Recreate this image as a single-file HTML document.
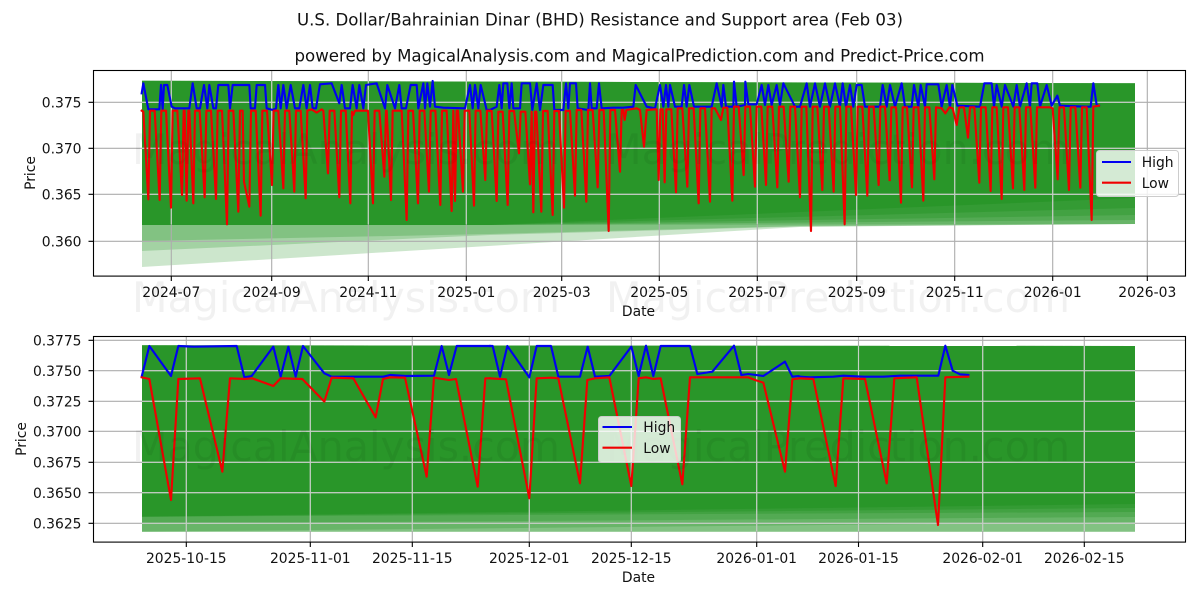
<!DOCTYPE html>
<html><head><meta charset="utf-8"><title>U.S. Dollar/Bahrainian Dinar (BHD) Resistance and Support area</title>
<style>
html,body{margin:0;padding:0;background:#fff}
svg{display:block}
text{font-family:"DejaVu Sans",sans-serif;fill:#111}
.t{font-size:13.89px}
.wm{font-size:41.67px;fill:#000;fill-opacity:.055}
.b{fill:none;stroke:#0000f0;stroke-width:6.4;stroke-linejoin:round;stroke-linecap:square}
.r{fill:none;stroke:#f00000;stroke-width:6.4;stroke-linejoin:round;stroke-linecap:square}
.f{fill:#008000;fill-opacity:.2;stroke:none}
</style></head><body>
<svg width="1200" height="600" viewBox="0 0 1200 600" xmlns="http://www.w3.org/2000/svg">
<rect width="1200" height="600" fill="#fff"/>
<text x="297" y="25.5" textLength="606" lengthAdjust="spacingAndGlyphs" style="font-size:16.67px">U.S. Dollar/Bahrainian Dinar (BHD) Resistance and Support area (Feb 03)</text>
<text x="294.5" y="61.5" textLength="690" lengthAdjust="spacingAndGlyphs" style="font-size:16.67px">powered by MagicalAnalysis.com and MagicalPrediction.com and Predict-Price.com</text>

<!-- TOP AXES fills -->
<g>
<polygon class="f" points="142,80.7 1135,83.3 1135,224 930,225.7 800,227 142,267"/>
<polygon class="f" points="142,80.7 1135,83.3 1135,224 800,226.5 490,235 142,251"/>
<polygon class="f" points="142,80.7 1135,83.3 1135,224 800,226 490,234 142,241"/>
<polygon class="f" points="142,80.7 1135,83.3 1135,224 490,225 142,225"/>
<polygon class="f" points="142,80.7 1135,83.3 1135,220 490,225 142,225"/>
<polygon class="f" points="142,80.7 1135,83.3 1135,215 490,225 142,225"/>
<polygon class="f" points="142,80.7 1135,83.3 1135,208 490,225 142,225"/>
<polygon class="f" points="142,80.7 1135,83.3 1135,198 490,225 142,225"/>
</g>
<path fill="none" stroke="#adadad" stroke-width="1.1" d="M171.3 70.5V276M271.7 70.5V276M368.3 70.5V276M466.3 70.5V276M561.7 70.5V276M659.3 70.5V276M757.3 70.5V276M856.7 70.5V276M954.7 70.5V276M1052.7 70.5V276M1147.3 70.5V276M93.5 102.3H1185.5M93.5 148.3H1185.5M93.5 194.3H1185.5M93.5 241.3H1185.5"/>
<path fill="none" stroke="#c4d0c4" stroke-width="1.1" d="M171.3 81V224M271.7 81V224M368.3 81V224M466.3 81V224M561.7 81V224M659.3 82V224M757.3 82V224M856.7 82V224M954.7 83V224M1052.7 83V224M142 102.3H1135M142 148.3H1135M142 194.3H1135"/>

<!-- top lines -->
<g transform="translate(90,65) scale(.33333)">
<polyline class="b" points="155,85 160,55 175,133 208,133 213,60 218,133 222,60 232,60 245,125 255,130 298,130 308,55 320,130 330,130 342,60 352,130 358,60 370,130 378,130 385,60 415,60 420,130 428,60 478,60 482,130 495,130 500,60 525,60 530,130 548,135 558,130 565,60 572,130 580,60 590,130 602,60 615,130 628,130 640,60 650,130 660,60 668,130 678,130 690,58 725,55 748,115 755,60 765,130 780,130 788,60 800,130 808,60 820,130 828,60 860,55 885,130 892,60 915,130 928,60 935,130 948,130 962,60 980,60 985,130 1000,55 1005,130 1012,55 1020,125 1028,48 1035,125 1060,128 1125,130 1140,60 1148,130 1155,60 1165,130 1172,60 1190,135 1200,135"/>
</g>
<g transform="translate(490,65) scale(.33333)">
<polyline class="b" points="0,135 20,125 28,60 35,130 40,55 52,55 58,130 65,55 70,130 90,130 95,55 120,55 127,135 140,55 150,135 160,60 188,60 193,135 220,135 228,55 235,130 240,55 258,55 263,130 295,135 300,55 305,130 320,130 327,55 335,130 370,128 400,128 430,125 437,60 470,125 495,130 510,60 520,125 528,60 535,125 540,60 555,125 575,125 582,60 590,125 598,60 612,125 665,125 680,55 695,125 700,60 708,125 730,125 732,50 740,125 765,120 766,50 775,118 800,118 815,60 825,120 835,60 845,120 860,60 870,120 880,55 915,125 930,125"/>
</g>
<g transform="translate(800,65) scale(.33333)">
<polyline class="b" points="0,125 20,55 30,125 45,55 60,125 75,55 90,125 105,55 120,125 128,55 138,125 150,60 160,125 170,60 185,60 195,125 240,125 248,60 260,125 270,60 285,125 305,55 315,125 335,125 342,60 355,125 362,60 375,125 380,58 415,58 425,125 440,60 450,125 457,60 472,122 540,125 553,55 575,55 582,125 590,60 605,125 615,60 640,125 650,60 660,125 680,55 690,125 695,55 712,55 720,125 740,60 755,122 772,92 780,122 860,125 872,125 880,55 890,120 897,122"/>
</g>
<g transform="translate(90,65) scale(.33333)">
<polyline class="r" points="155,137 160,140 175,403 180,137 194,137 209,405 214,137 228,137 243,428 248,137 262,137 276,390 281,137 284,137 290,407 295,137 298,137 310,415 315,137 329,137 344,397 349,137 363,137 378,402 383,137 396,137 411,478 416,137 430,137 445,440 450,137 458,137 462,350 478,425 483,137 497,137 512,452 517,137 531,137 546,360 551,137 565,137 580,370 585,137 598,137 613,380 618,137 632,137 647,400 652,137 665,133 680,143 695,133 700,137 714,325 719,137 733,137 748,397 753,137 767,137 781,415 786,140 790,150 795,137 834,137 849,415 854,137 868,137 883,335 888,137 890,137 903,405 908,137 935,137 950,465 955,137 969,137 984,415 989,137 1003,137 1017,380 1022,137 1036,137 1051,420 1056,137 1070,137 1085,438 1090,137 1095,408 1100,137 1104,137 1119,380 1124,137 1138,137 1152,422 1157,137 1171,137 1186,345 1191,137 1200,137"/>
</g>
<g transform="translate(490,65) scale(.33333)">
<polyline class="r" points="0,138 5,138 20,408 25,140 38,140 53,420 58,138 72,138 87,265 92,140 106,140 120,358 125,140 130,442 135,140 139,140 154,440 159,138 173,138 188,450 193,138 207,138 222,428 227,138 240,138 255,392 260,135 274,135 289,410 294,135 308,135 323,367 328,135 341,135 356,498 361,135 375,135 390,320 395,135 400,135 404,165 409,135 440,130 450,135 462,245 470,135 495,133 500,133 506,345 511,133 518,133 524,352 529,133 544,133 558,382 563,130 577,130 592,365 597,130 611,130 626,415 631,130 645,130 660,410 665,130 675,130 693,165 700,128 712,128 727,407 732,125 746,125 761,330 766,125 780,125 795,365 800,125 814,125 828,360 833,125 847,125 862,367 867,125 881,125 896,350 901,125 915,125 930,397 935,125 949,125 963,498 968,125 982,125 997,375 1002,125 1016,125 1031,380 1036,125 1050,125 1064,478 1069,125 1083,125 1098,390 1103,125 1117,125 1132,392 1137,125 1151,125 1166,360 1171,125 1185,125 1199,345"/>
</g>
<g transform="translate(800,65) scale(.33333)">
<polyline class="r" points="269,345 274,127 288,127 303,413 308,127 321,127 336,367 341,127 355,127 370,407 375,127 388,127 403,343 408,127 425,130 436,145 448,127 458,130 470,180 478,127 492,127 504,218 510,127 523,127 538,353 543,127 557,127 572,378 577,127 590,127 605,402 610,127 624,127 639,370 644,127 658,127 673,375 678,127 691,127 706,368 711,127 750,127 758,130 773,343 778,127 792,127 807,375 812,127 826,127 841,368 846,127 860,127 875,465 880,125 897,122"/>
</g>

<!-- watermark top -->
<text class="wm" x="132" y="164" textLength="428" lengthAdjust="spacingAndGlyphs">MagicalAnalysis.com</text>
<text class="wm" x="606" y="164" textLength="464" lengthAdjust="spacingAndGlyphs">MagicalPrediction.com</text>

<!-- top axes frame / ticks -->
<rect x="93.5" y="70.5" width="1092" height="205.6" fill="none" stroke="#000" stroke-width="1.1"/>
<path stroke="#000" stroke-width="1.1" fill="none" d="M171.3 276v5M271.7 276v5M368.3 276v5M466.3 276v5M561.7 276v5M659.3 276v5M757.3 276v5M856.7 276v5M954.7 276v5M1052.7 276v5M1147.3 276v5M88.5 102.3h5M88.5 148.3h5M88.5 194.3h5M88.5 241.3h5"/>
<g class="t" text-anchor="end">
<text x="81.5" y="107.4">0.375</text><text x="81.5" y="153.4">0.370</text><text x="81.5" y="199.4">0.365</text><text x="81.5" y="246.4">0.360</text>
</g>
<g class="t" text-anchor="middle">
<text x="171.3" y="297">2024-07</text><text x="271.7" y="297">2024-09</text><text x="368.3" y="297">2024-11</text><text x="466.3" y="297">2025-01</text><text x="561.7" y="297">2025-03</text><text x="659.3" y="297">2025-05</text><text x="757.3" y="297">2025-07</text><text x="856.7" y="297">2025-09</text><text x="954.7" y="297">2025-11</text><text x="1052.7" y="297">2026-01</text><text x="1147.3" y="297">2026-03</text>
<text x="638.5" y="316">Date</text>
<text transform="translate(35,173) rotate(-90)">Price</text>
</g>

<!-- top legend -->
<rect x="1096.5" y="150.5" width="82" height="46" rx="3" fill="#fff" fill-opacity=".8" stroke="#ccc" stroke-width="1"/>
<path d="M1102 162h29" stroke="#0000f0" stroke-width="2.1"/>
<path d="M1102 182.7h29" stroke="#f00000" stroke-width="2.1"/>
<text class="t" x="1141.7" y="167">High</text>
<text class="t" x="1141.7" y="188">Low</text>

<!-- BOTTOM AXES -->
<g>
<polygon class="f" points="142,345.3 1135,346 1135,531.7 142,531.7"/>
<polygon class="f" points="142,345.3 1135,346 1135,531.7 142,531.7"/>
<polygon class="f" points="142,345.3 1135,346 1135,531.7 142,531.7"/>
<polygon class="f" points="142,345.3 1135,346 1135,522 142,531.7"/>
<polygon class="f" points="142,345.3 1135,346 1135,517 142,523.5"/>
<polygon class="f" points="142,345.3 1135,346 1135,512 142,516.7"/>
<polygon class="f" points="142,345.3 1135,346 1135,508 142,516.7"/>
<polygon class="f" points="142,345.3 1135,346 1135,504 142,516.7"/>
</g>
<path fill="none" stroke="#adadad" stroke-width="1.1" d="M186.3 336.5V542M310.3 336.5V542M412.3 336.5V542M529.3 336.5V542M631.3 336.5V542M756.7 336.5V542M858.5 336.5V542M982.7 336.5V542M1084.3 336.5V542M93.5 340.3H1185.5M93.5 370.7H1185.5M93.5 401.3H1185.5M93.5 431.3H1185.5M93.5 462.3H1185.5M93.5 492.7H1185.5M93.5 523.3H1185.5"/>
<path fill="none" stroke="#c4d0c4" stroke-width="1.1" d="M186.3 346V531M310.3 346V531M412.3 346V531M529.3 346V531M631.3 346V531M756.7 346V531M858.5 346V531M982.7 346V531M1084.3 346V531M142 370.7H1135M142 401.3H1135M142 431.3H1135M142 462.3H1135M142 492.7H1135M142 523.3H1135"/>

<g transform="translate(90,330) scale(.33333)">
<polyline class="b" points="155,140 178,48 243,138 265,48 310,50 440,48 463,142 485,138 550,50 572,140 595,50 617,140 639,48 703,130 725,140 880,140 900,135 945,138 1032,137 1055,48 1077,135 1100,48 1200,48"/>
<polyline class="r" points="155,142 178,147 243,510 265,147 330,145 397,425 420,145 465,147 487,145 550,168 572,145 637,147 703,215 725,143 790,145 857,262 879,147 900,142 945,143 1010,440 1032,143 1077,150 1098,147 1163,470 1186,145 1200,145"/>
</g>
<g transform="translate(490,330) scale(.33333)">
<polyline class="b" points="0,48 8,48 30,140 52,48 118,142 140,48 183,48 205,140 270,140 293,50 315,140 358,138 424,50 446,138 468,47 490,138 512,48 600,48 622,132 667,125 732,47 754,135 775,132 820,138 885,95 907,140 925,138 930,140"/>
<polyline class="r" points="0,145 48,148 118,505 140,145 185,143 205,145 270,460 292,150 315,145 358,142 424,468 446,145 468,142 490,147 512,145 577,463 600,142 775,142 795,150 820,158 885,425 907,148 930,145"/>
</g>
<g transform="translate(800,330) scale(.33333)">
<polyline class="b" points="0,140 30,142 100,140 130,137 190,140 250,140 300,137 415,137 436,47 458,122 480,133 505,135"/>
<polyline class="r" points="0,145 40,147 107,468 130,145 195,147 260,460 283,145 350,142 414,585 436,142 505,140"/>
</g>

<!-- watermarks -->
<text class="wm" x="132" y="312" textLength="428" lengthAdjust="spacingAndGlyphs">MagicalAnalysis.com</text>
<text class="wm" x="606" y="312" textLength="464" lengthAdjust="spacingAndGlyphs">MagicalPrediction.com</text>
<text class="wm" x="132" y="461" textLength="428" lengthAdjust="spacingAndGlyphs">MagicalAnalysis.com</text>
<text class="wm" x="606" y="461" textLength="464" lengthAdjust="spacingAndGlyphs">MagicalPrediction.com</text>

<rect x="93.5" y="336.5" width="1092" height="205.6" fill="none" stroke="#000" stroke-width="1.1"/>
<path stroke="#000" stroke-width="1.1" fill="none" d="M186.3 542v5M310.3 542v5M412.3 542v5M529.3 542v5M631.3 542v5M756.7 542v5M858.5 542v5M982.7 542v5M1084.3 542v5M88.5 340.3h5M88.5 370.7h5M88.5 401.3h5M88.5 431.3h5M88.5 462.3h5M88.5 492.7h5M88.5 523.3h5"/>
<g class="t" text-anchor="end">
<text x="81.5" y="345.4">0.3775</text><text x="81.5" y="375.8">0.3750</text><text x="81.5" y="406.4">0.3725</text><text x="81.5" y="436.4">0.3700</text><text x="81.5" y="467.4">0.3675</text><text x="81.5" y="497.8">0.3650</text><text x="81.5" y="528.4">0.3625</text>
</g>
<g class="t" text-anchor="middle">
<text x="186.3" y="563">2025-10-15</text><text x="310.3" y="563">2025-11-01</text><text x="412.3" y="563">2025-11-15</text><text x="529.3" y="563">2025-12-01</text><text x="631.3" y="563">2025-12-15</text><text x="756.7" y="563">2026-01-01</text><text x="858.5" y="563">2026-01-15</text><text x="982.7" y="563">2026-02-01</text><text x="1084.3" y="563">2026-02-15</text>
<text x="638.5" y="582">Date</text>
<text transform="translate(26,439) rotate(-90)">Price</text>
</g>

<!-- bottom legend -->
<rect x="598.5" y="416.5" width="82" height="46" rx="3" fill="#fff" fill-opacity=".8" stroke="#ccc" stroke-width="1"/>
<path d="M602.5 427h29.5" stroke="#0000f0" stroke-width="2.1"/>
<path d="M602.5 447.7h29.5" stroke="#f00000" stroke-width="2.1"/>
<text class="t" x="643.3" y="432">High</text>
<text class="t" x="643.3" y="453">Low</text>
</svg>
</body></html>
